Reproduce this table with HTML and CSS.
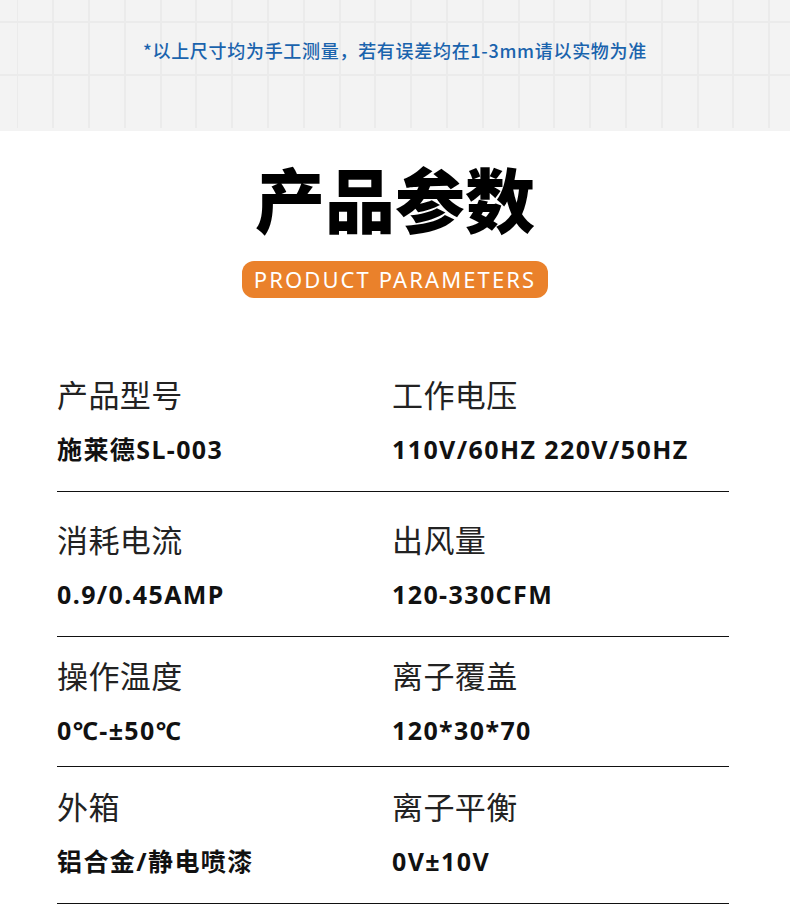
FILE: index.html
```html
<!DOCTYPE html>
<html lang="zh-CN">
<head>
    <meta charset="UTF-8">
    <meta name="viewport" content="width=device-width, initial-scale=1.0">
    <title>产品参数</title>
    <link rel="stylesheet" href="styles.css">
</head>
<body>
    <!-- Measurement notice on grid paper -->
    <div class="notice">
        <p class="notice-text">*以上尺寸均为手工测量，若有误差均在1-3mm请以实物为准</p>
    </div>

    <section class="params">
        <h1 class="params-title">产品参数</h1>
        <div class="params-badge">PRODUCT PARAMETERS</div>

        <div class="spec-list">
            <div class="spec-row">
                <div class="spec-cell">
                    <div class="spec-label">产品型号</div>
                    <div class="spec-value">施莱德SL-003</div>
                </div>
                <div class="spec-cell">
                    <div class="spec-label">工作电压</div>
                    <div class="spec-value">110V/60HZ 220V/50HZ</div>
                </div>
            </div>
            <div class="spec-row spec-row--tall">
                <div class="spec-cell">
                    <div class="spec-label">消耗电流</div>
                    <div class="spec-value">0.9/0.45AMP</div>
                </div>
                <div class="spec-cell">
                    <div class="spec-label">出风量</div>
                    <div class="spec-value">120-330CFM</div>
                </div>
            </div>
            <div class="spec-row spec-row--short">
                <div class="spec-cell">
                    <div class="spec-label">操作温度</div>
                    <div class="spec-value">0℃-±50℃</div>
                </div>
                <div class="spec-cell">
                    <div class="spec-label">离子覆盖</div>
                    <div class="spec-value">120*30*70</div>
                </div>
            </div>
            <div class="spec-row">
                <div class="spec-cell">
                    <div class="spec-label">外箱</div>
                    <div class="spec-value">铝合金/静电喷漆</div>
                </div>
                <div class="spec-cell">
                    <div class="spec-label">离子平衡</div>
                    <div class="spec-value">0V±10V</div>
                </div>
            </div>
        </div>
    </section>
</body>
</html>
```

FILE: styles.css
```css
body {
    margin: 0;
    width: 790px;
    background-color: #ffffff;
    color: #111;
    font-family: "Noto Sans CJK SC", "Noto Sans", sans-serif;
}

/* Grid paper strip at the top */
.notice {
    height: 131px;
    box-sizing: border-box;
    padding-top: 38px;
    background-color: #f3f3f3;
    background-image:
        linear-gradient(to bottom, transparent 21px, #ebebeb 21px, #ebebeb 23px, transparent 23px,
            transparent 74px, #ebebeb 74px, #ebebeb 76px, transparent 76px),
        repeating-linear-gradient(to right, transparent 0, transparent 16.5px, #ebebeb 16.5px, #ebebeb 18.5px, transparent 18.5px, transparent 35.8px);
    background-size: 100% 100%, 100% 128px;
    background-repeat: no-repeat;
}

.notice-text {
    margin: 0;
    text-align: center;
    font-size: 18px;
    line-height: 24px;
    font-weight: 500;
    letter-spacing: 0.7px;
    color: #1a63ad;
}

.params {
    display: flex;
    flex-direction: column;
    align-items: center;
}

.params-title {
    margin: 32px 0 0;
    font-size: 70px;
    line-height: 70px;
    font-weight: 900;
    color: #000;
}

.params-badge {
    margin-top: 28px;
    width: 306px;
    height: 37px;
    border-radius: 12px;
    background-color: #ea812b;
    color: #fff;
    font-family: "Noto Sans", sans-serif;
    font-size: 22px;
    line-height: 37px;
    text-align: center;
    letter-spacing: 2.1px;
}

/* Parameter table */
.spec-list {
    align-self: flex-start;
    margin-left: 57px;
    margin-top: 57px;
    width: 672px;
}

.spec-row {
    display: grid;
    grid-template-columns: 335px 1fr;
    height: 137px;
    box-sizing: border-box;
    padding-top: 21px;
    border-bottom: 1px solid #111;
}

.spec-row--tall {
    height: 145px;
    padding-top: 29px;
}

.spec-row--short {
    height: 130px;
    padding-top: 20px;
}

.spec-label {
    font-size: 31px;
    line-height: 36px;
    font-weight: 400;
    letter-spacing: 0.4px;
    color: #222;
}

.spec-value {
    margin-top: 21px;
    font-family: "Noto Sans", "Noto Sans CJK SC", sans-serif;
    font-size: 25px;
    line-height: 32px;
    font-weight: 700;
    letter-spacing: 1.4px;
    color: #111;
}
```
